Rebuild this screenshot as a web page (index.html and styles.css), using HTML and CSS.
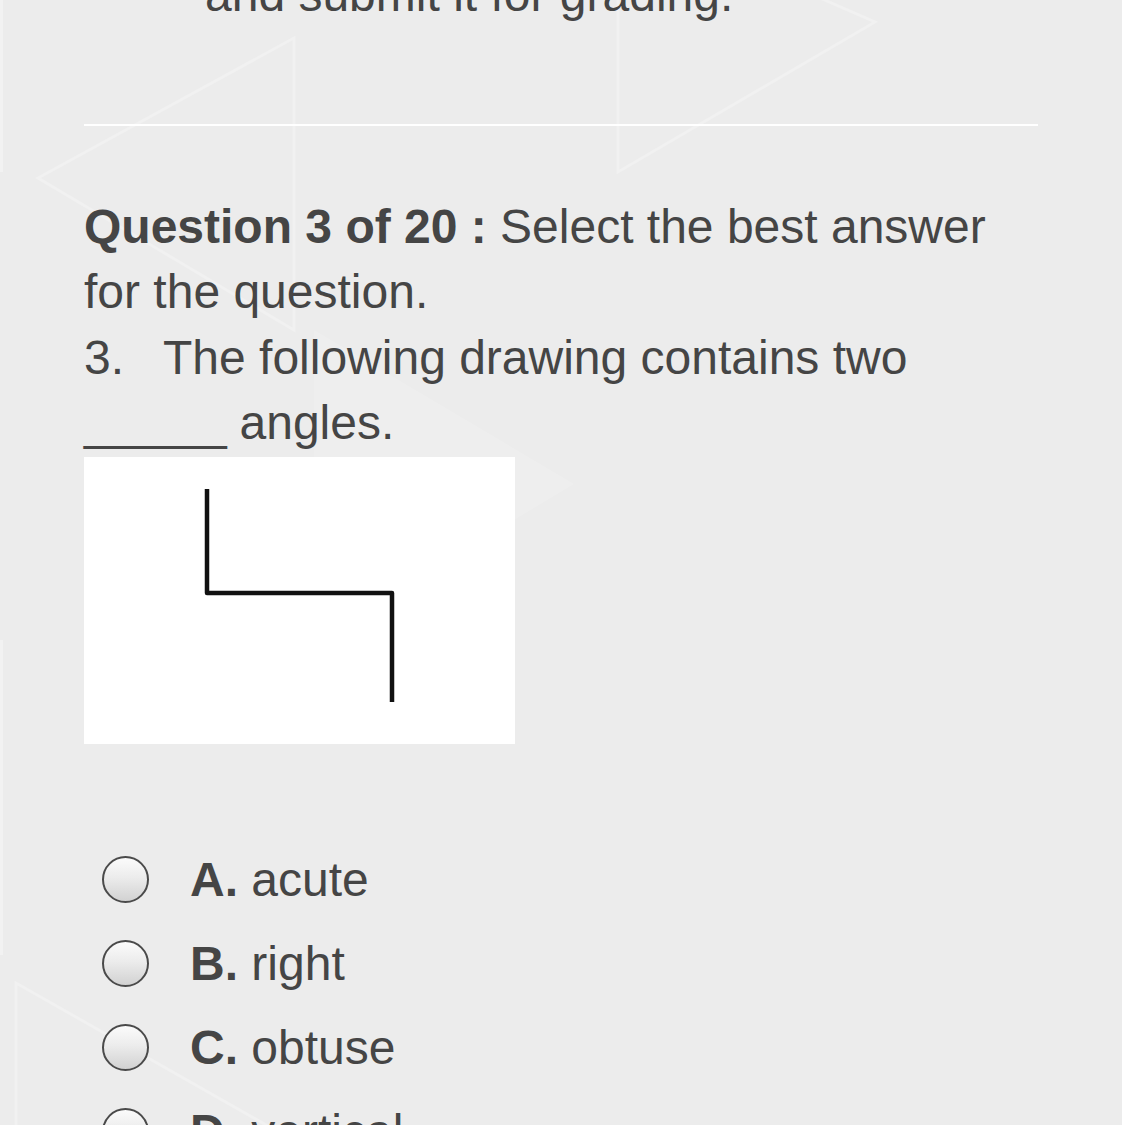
FILE: index.html
```html
<!DOCTYPE html>
<html lang="en">
<head>
<meta charset="utf-8">
<title>Question 3 of 20</title>
<link rel="stylesheet" href="styles.css">
</head>
<body>
<svg class="backdrop" width="1122" height="1125" viewBox="0 0 1122 1125" aria-hidden="true">
  <rect class="bd-fill" x="0" y="0" width="3" height="172"/>
  <rect class="bd-fill" x="0" y="640" width="3" height="315"/>
  <polygon class="bd-soft" points="314,330 574,484 314,640"/>
  <polygon class="bd-line" points="294,38 38,178 294,330"/>
  <polyline class="bd-line" points="618,0 618,172 875,22 820,-2"/>
  <polyline class="bd-line" points="16,1130 16,983 275,1130"/>
</svg>
<main class="page">
  <p class="intro">and submit it for grading.</p>
  <hr class="divider">
  <p class="prompt"><strong>Question 3 of 20 :</strong> Select the best answer for the question.</p>
  <p class="stem"><span class="num">3.</span>The following drawing contains two <span class="blank">______</span> angles.</p>
  <div class="figure">
    <svg class="figure-art" width="431" height="287" viewBox="0 0 431 287">
      <path d="M123 32 V136 H308 V245" fill="none" stroke="#111" stroke-width="4.5" stroke-linejoin="round"/>
    </svg>
  </div>
  <ul class="options">
    <li class="option"><span class="radio"></span><span class="label"><b>A.</b> acute</span></li>
    <li class="option"><span class="radio"></span><span class="label"><b>B.</b> right</span></li>
    <li class="option"><span class="radio"></span><span class="label"><b>C.</b> obtuse</span></li>
    <li class="option"><span class="radio"></span><span class="label"><b>D.</b> vertical</span></li>
  </ul>
</main>
</body>
</html>
```

FILE: styles.css
```css
html, body {
  margin: 0;
  padding: 0;
}
body {
  background: #ececec;
  width: 1122px;
  height: 1125px;
  overflow: hidden;
  position: relative;
  font-family: "Liberation Sans", Arial, Helvetica, sans-serif;
  color: #454545;
}
.backdrop {
  position: absolute;
  left: 0;
  top: 0;
  z-index: 0;
}
.bd-line {
  fill: none;
  stroke: #ffffff;
  stroke-opacity: 0.25;
  stroke-width: 3;
}
.bd-fill {
  fill: #ffffff;
  fill-opacity: 0.3;
}
.bd-soft {
  fill: #ffffff;
  fill-opacity: 0.14;
}
.page {
  position: relative;
  z-index: 1;
  width: 954px;
  padding-left: 84px;
  margin-top: -38px;
  font-size: 48px;
  line-height: 65.5px;
}
.intro {
  margin: 0;
  padding-left: 121px;
}
.divider {
  margin: 96px 0 0;
  border: 0;
  height: 2px;
  background: #ffffff;
}
.prompt {
  margin: 68px 0 0;
}
.prompt strong {
  font-weight: 700;
}
.stem {
  margin: 0;
}
.num {
  display: inline-block;
  width: 79px;
}
.blank {
  letter-spacing: -3.5px;
  margin-right: 3px;
}
.figure {
  width: 431px;
  height: 287px;
  margin-top: 1px;
  background: #ffffff;
}
.figure-art {
  display: block;
  filter: blur(0.5px);
}
.options {
  list-style: none;
  margin: 94px 0 0;
  padding: 0;
}
.option {
  display: flex;
  align-items: center;
  height: 84px;
  line-height: 84px;
}
.radio {
  box-sizing: border-box;
  width: 47px;
  height: 47px;
  margin-left: 18px;
  margin-right: 41px;
  border: 2.5px solid #4a4a4a;
  border-radius: 50%;
  background: linear-gradient(#fbfbfb 0%, #ececec 45%, #d2d2d2 100%);
  flex: none;
}
.label b {
  font-weight: 700;
}
```
